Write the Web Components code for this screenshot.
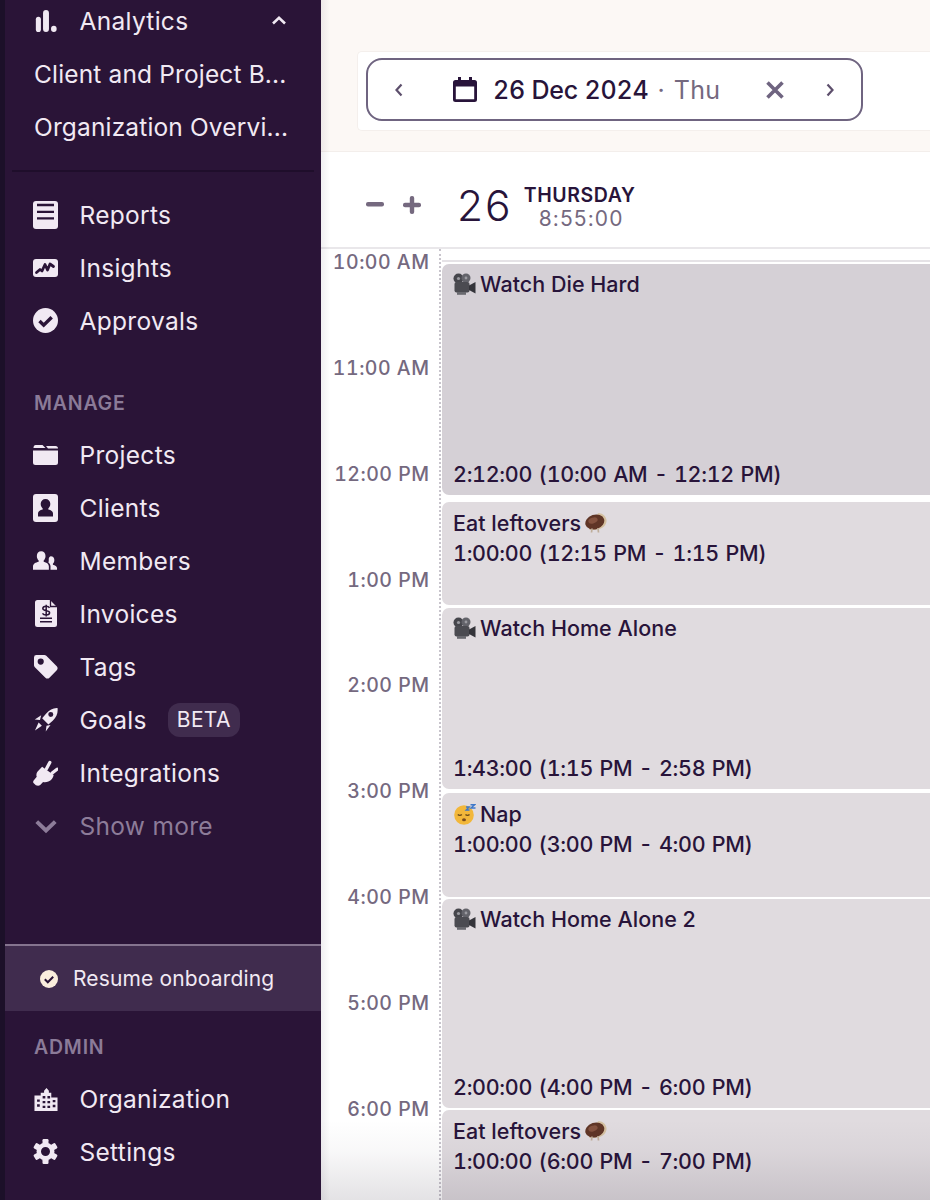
<!DOCTYPE html>
<html>
<head>
<meta charset="utf-8">
<title>Calendar</title>
<style>
  html, body { margin: 0; height: 1200px; overflow: hidden; background: #fff; }
  body { font-family: Inter, "Noto Sans", sans-serif; display: flex; }
</style>
</head>
<body>
<app-shell>
  <side-bar slot="side"></side-bar>
  <day-view slot="main"></day-view>
</app-shell>

<script>
const ICONS = {
  analytics: `<rect x="1" y="8" width="6" height="18" rx="3"/><rect x="9.500" y="0" width="7" height="26" rx="3.500"/><rect x="19" y="18.500" width="6.500" height="7.500" rx="3.200"/>`,
  reports: `<rect width="25" height="28" rx="3"/><path d="M4 4h17M4 10.800h17M4 17.300h17" fill="none" stroke="#2a1437" stroke-width="2.300"/>`,
  insights: `<rect width="25" height="18" rx="3"/><path d="M3.500 13.500l3.500-3 2 1.500 3-6.500 2.500 5.500 2.500-6 3.500 2.500" fill="none" stroke="#2a1437" stroke-width="2.800" stroke-linejoin="round" stroke-linecap="round"/>`,
  check: `<circle cx="12.500" cy="12.500" r="12.500"/><path d="M6.500 13l4.200 4.200 8-8" fill="none" stroke="#2a1437" stroke-width="3.400"/>`,
  projects: `<path d="M2.500 0h7l3 3h-12V2.500A2.500 2.500 0 0 1 2.500 0zM0 5.500h25v12a2.500 2.500 0 0 1-2.500 2.500h-20A2.500 2.500 0 0 1 0 17.500z"/><path d="M13 1h9.500A2.500 2.500 0 0 1 25 3.500H15z"/>`,
  clients: `<rect width="25" height="28" rx="3"/><path fill="#2a1437" d="M12.500 5a4.800 4.800 0 0 1 4.800 5c0 2-.9 3.500-2 4.400v1.200c2.800.6 4.700 1.900 4.700 3.900V22.500H5v-3c0-2 1.900-3.300 4.700-3.900v-1.200c-1.100-.9-2-2.400-2-4.400a4.800 4.800 0 0 1 4.800-5z"/>`,
  members: `<path d="M8.500 0C11.200 0 13 2 13 4.700c0 2-.8 3.700-1.900 4.700v1.400c3 .7 5.400 2.200 5.400 4.700V19H0v-3.500c0-2.500 2.800-4 5.900-4.700V9.400C4.800 8.400 4 6.700 4 4.700 4 2 5.800 0 8.500 0z"/><path d="M18.500 5c2.300 0 3.700 1.700 3.700 4 0 1.700-.6 3-1.500 3.800v1c2.300.5 4.300 1.600 4.300 3.500V19h-6.800v-3.500c0-1.700-.9-3-2.200-4 .3-.8.4-1.600.4-2.500 0-.4 0-.8-.1-1.100C16.700 6 17.500 5 18.500 5z"/>`,
  invoices: `<path fill-rule="evenodd" d="M2.500 0H15l7 7v17.500a2.500 2.500 0 0 1-2.500 2.500h-17A2.500 2.500 0 0 1 0 24.500v-22A2.500 2.500 0 0 1 2.500 0z"/><path d="M5 17.500h12v1.500H5zM5 21h12v1.500H5z" fill="#2a1437"/><path d="M15.500 0v6.500H22" fill="none" stroke="#2a1437" stroke-width="1.300"/><path d="M14.500 7.800c-.6-1-1.700-1.500-3.300-1.500-2 0-3.400.9-3.400 2.300 0 3 6.800 1.500 6.800 4.200 0 1.300-1.400 2.200-3.500 2.200-1.700 0-3-.6-3.600-1.700M11.200 4.800v11.800" fill="none" stroke="#2a1437" stroke-width="1.500"/>`,
  tags: `<path fill-rule="evenodd" d="M2.500 0h8.300c.8 0 1.400.3 2 .8l10.900 11c1.200 1.200 1.200 3 0 4.200l-7.600 7.600c-1.200 1.200-3 1.200-4.200 0L.9 12.800A3 3 0 0 1 0 10.700V2.500A2.500 2.500 0 0 1 2.500 0zM7 3.700a3.200 3.200 0 1 0 0 6.400 3.200 3.200 0 0 0 0-6.400z"/>`,
  goals: `<path fill-rule="evenodd" d="M24.500.5c.7 5-1 9.500-5 13.200l-4.500 4-6.500-6.500 4-4.700C16.200 2.500 20 .2 24.500.5zM17.500 4.800a2.600 2.600 0 1 0 0 5.200 2.600 2.600 0 0 0 0-5.200z"/><path d="M7.500 8L.8 12.500l5.400.6zM13 19l-.8 6 5-6.800zM4.800 15.500l3.400 3.400-7.200 5z"/>`,
  plug: `<path d="M14 8.500l3.500-6.500M20 13l5-4" fill="none" stroke="currentColor" stroke-width="3.400" stroke-linecap="round"/><path d="M9.500 6.500L21.500 15c-.5 3-2.500 5.500-5.500 6.800-2 .9-4 1-5.500.5L7.500 25.500c-1 1-3 1-4.500.3L.5 23.500c-.6-1-.4-2 .4-3l3-3.500c-.8-2-.3-4 .9-5.500z"/>`,
  chevron: `<path d="M2 5l10.500 10L23 5" fill="none" stroke="currentColor" stroke-width="4.500"/>`,
  org: `<path fill-rule="evenodd" d="M7 10V7h3.500V5L13 2l2.500 3v2H18v3h0v2h6.500v14H.5V10zM3.200 14v2.500h2.800V14zM3.200 19v2.500h2.800V19zM9 10.500V13h2.800v-2.500zM14 10.500V13h2.800v-2.500zM9 15.500V18h2.800v-2.500zM14 15.500V18h2.800v-2.500zM9 20.500V23h2.800v-2.500zM14 20.500V23h2.800v-2.500zM19.500 14.500V17h2.800v-2.500zM19.500 19.500V22h2.800v-2.500z"/>`,
  gear: `<path fill-rule="evenodd" d="M12.500 3.500a9 9 0 1 1 0 18 9 9 0 0 1 0-18zM12.500 8a4.500 4.500 0 1 0 0 9 4.500 4.500 0 0 0 0-9z"/><rect x="9.500" y="0" width="6" height="5" rx="1.200"/><rect x="9.500" y="0" width="6" height="5" rx="1.200" transform="rotate(60 12.500 12.500)"/><rect x="9.500" y="0" width="6" height="5" rx="1.200" transform="rotate(120 12.500 12.500)"/><rect x="9.500" y="0" width="6" height="5" rx="1.200" transform="rotate(180 12.500 12.500)"/><rect x="9.500" y="0" width="6" height="5" rx="1.200" transform="rotate(240 12.500 12.500)"/><rect x="9.500" y="0" width="6" height="5" rx="1.200" transform="rotate(300 12.500 12.500)"/>`
};
const ICON_BOX = {
  analytics: [26,26,22,24], reports: [25,28,25,28], insights: [25,18,25,18], check: [25,25,25,25],
  projects: [25,20,25,20], clients: [25,28,25,28], members: [26,19,26,19], invoices: [22,27,22,27],
  tags: [25,25,24,24], goals: [25,25,24,25], plug: [26,26,25,26], chevron: [25,20,22,18],
  org: [25,26,24,25], gear: [25,25,25,25]
};

class NavIcon extends HTMLElement {
  connectedCallback() {
    const name = this.getAttribute('name');
    const [vw, vh, w, h] = ICON_BOX[name];
    this.attachShadow({ mode: 'open' }).innerHTML = `
      <style>
        :host { display: flex; width: 25px; height: 28px; align-items: center; justify-content: center; flex: none; color: inherit; }
        svg { display: block; fill: currentColor; }
      </style>
      <svg width="${w}" height="${h}" viewBox="0 0 ${vw} ${vh}">${ICONS[name]}</svg>`;
  }
}
customElements.define('nav-icon', NavIcon);

class NavItem extends HTMLElement {
  constructor() {
    super();
    this.attachShadow({ mode: 'open' }).innerHTML = `
      <style>
        :host { display: flex; align-items: center; height: 53px; padding-left: 28px; color: #f1e9f3; font-size: 24.500px; letter-spacing: .3px; white-space: nowrap; }
        :host([muted]) { color: #8d7c99; }
        ::slotted(nav-icon) { margin-right: 21.500px; }
      </style>
      <slot name="icon"></slot><slot></slot>`;
  }
}
customElements.define('nav-item', NavItem);

class NavHeading extends HTMLElement {
  constructor() {
    super();
    this.attachShadow({ mode: 'open' }).innerHTML = `
      <style>
        :host { display: block; height: 20px; line-height: 20px; padding-left: 29px; font-size: 19.500px; font-weight: 600; letter-spacing: .8px; color: #8b7b98; }
      </style>
      <slot></slot>`;
  }
}
customElements.define('nav-heading', NavHeading);

class SideBar extends HTMLElement {
  constructor() {
    super();
    const item = (icon, label) => `<nav-item><nav-icon slot="icon" name="${icon}"></nav-icon>${label}</nav-item>`;
    this.attachShadow({ mode: 'open' }).innerHTML = `
      <style>
        :host { display: flex; flex-direction: column; width: 316px; height: 1206px; margin-top: -6px; background: #2a1437; border-left: 5px solid #1c1029; font-family: Inter, "Noto Sans", sans-serif; }
        .caret { margin-left: auto; margin-right: 35px; }
        .sub { padding-left: 29px; letter-spacing: .15px; }
        hr { border: 0; height: 2px; background: #1f0e2b; margin: 17px 7px 16px 7px; width: 302px; }
        .head-manage { margin: 46px 0 15px; }
        .beta { margin-left: 21px; padding: 0 9px; height: 34px; line-height: 34px; border-radius: 12px; background: #402c4e; font-size: 21px; letter-spacing: .3px; }
        .resume { margin-top: auto; display: flex; align-items: center; height: 65px; border-top: 2px solid #85748f; background: #402c4e; padding-left: 35px; color: #f1e9f3; font-size: 21px; letter-spacing: .15px; }
        .resume svg { width: 18px; height: 18px; margin-right: 15px; flex: none; }
        .head-admin { margin: 26px 0 15px; }
        .foot { padding-bottom: 22px; }
      </style>
      <nav-item><nav-icon slot="icon" name="analytics"></nav-icon>Analytics
        <svg class="caret" width="14" height="9" viewBox="0 0 14 9"><path d="M1 7.500L7 1.800l6 5.700" fill="none" stroke="#f1e9f3" stroke-width="2.600"/></svg>
      </nav-item>
      <nav-item class="sub">Client and Project B...</nav-item>
      <nav-item class="sub">Organization Overvi...</nav-item>
      <hr>
      ${item('reports', 'Reports')}
      ${item('insights', 'Insights')}
      ${item('check', 'Approvals')}
      <nav-heading class="head-manage">MANAGE</nav-heading>
      ${item('projects', 'Projects')}
      ${item('clients', 'Clients')}
      ${item('members', 'Members')}
      ${item('invoices', 'Invoices')}
      ${item('tags', 'Tags')}
      <nav-item><nav-icon slot="icon" name="goals"></nav-icon>Goals<span class="beta">BETA</span></nav-item>
      ${item('plug', 'Integrations')}
      <nav-item muted><nav-icon slot="icon" name="chevron"></nav-icon>Show more</nav-item>
      <div class="resume">
        <svg viewBox="0 0 18 18"><circle cx="9" cy="9" r="9" fill="#fbeedd"/><path d="M4.800 9.300l3 3 5.400-5.600" fill="none" stroke="#2a1437" stroke-width="2"/></svg>
        Resume onboarding
      </div>
      <nav-heading class="head-admin">ADMIN</nav-heading>
      ${item('org', 'Organization')}
      <div class="foot">${item('gear', 'Settings')}</div>`;
  }
}
customElements.define('side-bar', SideBar);

class DatePicker extends HTMLElement {
  constructor() {
    super();
    this.attachShadow({ mode: 'open' }).innerHTML = `
      <style>
        :host { display: block; margin-left: 36px; padding: 6px 8px 8px; height: 64px; background: #fff; border: 1px solid #f4efec; border-right: 0; border-radius: 5px 0 0 5px; }
        .box { display: flex; align-items: center; box-sizing: border-box; width: 497px; height: 63px; border: 2px solid #6f6480; border-radius: 16px; color: #28143a; }
        .prev { margin-left: 26px; }
        .cal { margin-left: 49px; margin-right: 16px; }
        .date { font-size: 25px; font-weight: 500; letter-spacing: -.2px; white-space: nowrap; font-variant-numeric: tabular-nums; }
        .dot { color: #75697f; margin: 0 9px 0 9px; font-size: 25px; }
        .day { color: #75697f; font-size: 25px; letter-spacing: .3px; }
        .x { margin-left: 45px; }
        .next { margin-left: 40px; }
      </style>
      <div class="box">
        <svg class="prev" width="10" height="16" viewBox="0 0 10 16"><path d="M7.500 2.500L2.500 8l5 5.500" fill="none" stroke="#5d4f6c" stroke-width="2.200"/></svg>
        <svg class="cal" width="24" height="25" viewBox="0 0 24 25"><path d="M5 0h3v3h8V0h3v3h2.500A2.500 2.500 0 0 1 24 5.500v17a2.500 2.500 0 0 1-2.500 2.500h-19A2.500 2.500 0 0 1 0 22.500v-17A2.500 2.500 0 0 1 2.500 3H5zM2.800 9.500v12.700h18.400V9.500z" fill="#28143a"/></svg>
        <span class="date">26 Dec 2024</span><span class="dot">·</span><span class="day">Thu</span>
        <svg class="x" width="20" height="20" viewBox="0 0 20 20"><path d="M2.500 2.500l15 15M17.500 2.500l-15 15" fill="none" stroke="#6f6480" stroke-width="3.600"/></svg>
        <svg class="next" width="10" height="16" viewBox="0 0 10 16"><path d="M2.500 2.500L7.500 8l-5 5.500" fill="none" stroke="#5d4f6c" stroke-width="2.200"/></svg>
      </div>`;
  }
}
customElements.define('date-picker', DatePicker);

class DayHeader extends HTMLElement {
  constructor() {
    super();
    this.attachShadow({ mode: 'open' }).innerHTML = `
      <style>
        :host { display: flex; align-items: center; box-sizing: border-box; height: 97px; padding-left: 45px; border-bottom: 2px solid #e9e7ea; color: #28143a; }
        .zoom { display: flex; align-items: center; gap: 19px; margin-right: 36px; padding-top: 10px; }
        .num { font-size: 42.500px; font-weight: 300; letter-spacing: 2px; margin-right: 11px; padding-top: 12px; }
        .meta { display: flex; flex-direction: column; align-items: center; padding-top: 15px; }
        .dow { font-size: 19.500px; font-weight: 600; letter-spacing: .6px; line-height: 24px; }
        .time { font-size: 21px; color: #75697f; letter-spacing: 1.100px; line-height: 24px; padding-left: 3px; }
      </style>
      <div class="zoom">
        <svg width="18" height="5" viewBox="0 0 18 5"><rect width="18" height="4.500" rx="2" fill="#75697f"/></svg>
        <svg width="18" height="18" viewBox="0 0 18 18"><rect y="6.800" width="18" height="4.400" rx="2" fill="#75697f"/><rect x="6.800" width="4.400" height="18" rx="2" fill="#75697f"/></svg>
      </div>
      <span class="num">26</span>
      <div class="meta"><span class="dow">THURSDAY</span><span class="time">8:55:00</span></div>`;
  }
}
customElements.define('day-header', DayHeader);

const EMOJI = {
  camera: `<svg width="23" height="22" viewBox="0 0 23 22"><circle cx="5.500" cy="5.500" r="5" fill="#46464c"/><circle cx="13" cy="5" r="4.500" fill="#63636a"/><circle cx="5.500" cy="5.500" r="1.600" fill="#9a9aa0"/><circle cx="13" cy="5" r="1.400" fill="#9a9aa0"/><rect x="1.500" y="9" width="15" height="10.500" rx="2" fill="#4b4b51"/><path d="M16 12.500l6.500-3.500v11.500L16 17z" fill="#34343a"/><rect x="4" y="19" width="9" height="2.800" fill="#6a6a70"/></svg>`,
  turkey: `<svg width="22" height="20" viewBox="0 0 22 20"><path d="M13 .3c4-.8 8 2.500 8.500 6.700.3 2.500-.8 4.800-2.500 6.500-2 2-5 3.200-8.500 3.200H4z" fill="#d4c0a0"/><ellipse cx="9.800" cy="9" rx="9.700" ry="7.300" fill="#5f3526" transform="rotate(-18 9.800 9)"/><ellipse cx="8" cy="7.500" rx="4.800" ry="2.800" fill="#84523f" transform="rotate(-18 8 7.500)"/><path d="M7 15.500l-.5 4M13 15l.5 4.500" stroke="#bfae9a" stroke-width="1.700"/></svg>`,
  sleep: `<svg width="23" height="21" viewBox="0 0 23 21"><circle cx="11" cy="11" r="9.800" fill="#f2b73a"/><path d="M4.800 10.500c1 1 3 1 4 0M12.500 10.500c1 1 3 1 4 0" fill="none" stroke="#6b4a16" stroke-width="1.400"/><ellipse cx="11" cy="15.800" rx="2" ry="1.500" fill="#7a4c1d"/><path d="M13 3h3.200l-3 3h3.300M17.500.8h4L18 4h4.500" fill="none" stroke="#3f78c9" stroke-width="1.400"/></svg>`
};

class CalEvent extends HTMLElement {
  constructor() {
    super();
    this.attachShadow({ mode: 'open' }).innerHTML = `
      <style>
        :host { display: flex; flex-direction: column; justify-content: space-between; box-sizing: border-box; flex: none; padding: 7px 0 8px 11px; border-radius: 7px 0 0 7px; background: #e0dbdf; color: #28143a; font-size: 21.500px; font-weight: 500; line-height: 26px; white-space: nowrap; }
        :host([dark]) { background: #d5d0d6; }
        :host([compact]) { justify-content: flex-start; gap: 4px; padding-top: 8px; }
        ::slotted([slot="title"]) { display: flex; align-items: center; gap: 4px; letter-spacing: .02px; }
        ::slotted([slot="time"]) { font-variant-numeric: tabular-nums; letter-spacing: -.3px; word-spacing: 1px; }
      </style>
      <slot name="title"></slot><slot name="time"></slot>`;
  }
  connectedCallback() {
    this.style.height = this.getAttribute('h') + 'px';
    this.style.marginTop = (this.getAttribute('gap') || 0) + 'px';
  }
}
customElements.define('cal-event', CalEvent);

class DayView extends HTMLElement {
  constructor() {
    super();
    const hours = ['10:00 AM','11:00 AM','12:00 PM','1:00 PM','2:00 PM','3:00 PM','4:00 PM','5:00 PM','6:00 PM'];
    const ev = (h, gap, title, time, attrs = '') => `<cal-event h="${h}" gap="${gap}" ${attrs}><div slot="title">${title}</div><div slot="time">${time}</div></cal-event>`;
    this.attachShadow({ mode: 'open' }).innerHTML = `
      <style>
        :host { display: flex; flex-direction: column; flex: 1; height: 1200px; min-width: 0; position: relative; overflow: hidden; background: #fff; font-family: Inter, "Noto Sans", sans-serif; }
        .top { height: 152px; box-sizing: border-box; padding-top: 51px; background: #fcf8f5; border-bottom: 1px solid #f3eeeb; }
        .grid { display: flex; flex: 1; min-height: 0; }
        .hours { width: 118px; flex: none; display: flex; flex-direction: column; gap: 81.850px; align-items: flex-end; box-sizing: border-box; padding: 1px 9.500px 0 0; }
        .hours span { height: 24px; line-height: 24px; color: #75697f; font-size: 19.500px; font-weight: 500; letter-spacing: .5px; white-space: nowrap; font-variant-numeric: tabular-nums; }
        .events { flex: 1; display: flex; flex-direction: column; border-left: 2px dotted #c8c4cc; padding: 12px 0 0 1px; position: relative; }
        .events::before { content: ""; position: absolute; left: 1px; right: 0; top: 11px; height: 2px; background: #e5e2e6; }
        .fade-left { position: absolute; left: 0; top: 0; bottom: 0; width: 9px; background: linear-gradient(to right, rgba(40,20,55,.07), rgba(40,20,55,0)); pointer-events: none; }
        .fade-bottom { position: absolute; left: 0; right: 0; bottom: 0; height: 80px; background: linear-gradient(to bottom, rgba(30,20,40,0), rgba(30,20,40,.03) 40%, rgba(30,20,40,.12)); pointer-events: none; }
      </style>
      <div class="top"><date-picker></date-picker></div>
      <day-header></day-header>
      <div class="grid">
        <div class="hours">${hours.map(h => `<span>${h}</span>`).join('')}</div>
        <div class="events">
          ${ev(231, 3, `${EMOJI.camera}Watch Die Hard`, '2:12:00 (10:00 AM - 12:12 PM)', 'dark')}
          ${ev(103, 7, `Eat leftovers ${EMOJI.turkey}`, '1:00:00 (12:15 PM - 1:15 PM)', 'compact')}
          ${ev(181, 3, `${EMOJI.camera}Watch Home Alone`, '1:43:00 (1:15 PM - 2:58 PM)')}
          ${ev(104, 4, `${EMOJI.sleep}Nap`, '1:00:00 (3:00 PM - 4:00 PM)', 'compact')}
          ${ev(209, 2, `${EMOJI.camera}Watch Home Alone 2`, '2:00:00 (4:00 PM - 6:00 PM)')}
          ${ev(110, 2, `Eat leftovers ${EMOJI.turkey}`, '1:00:00 (6:00 PM - 7:00 PM)', 'compact')}
        </div>
      </div>
      <div class="fade-left"></div>
      <div class="fade-bottom"></div>`;
  }
}
customElements.define('day-view', DayView);

class AppShell extends HTMLElement {
  constructor() {
    super();
    this.attachShadow({ mode: 'open' }).innerHTML = `
      <style>
        :host { display: flex; width: 930px; height: 1200px; overflow: hidden; }
        ::slotted([slot="side"]) { flex: none; }
      </style>
      <slot name="side"></slot><slot name="main"></slot>`;
  }
}
customElements.define('app-shell', AppShell);
</script>
</body>
</html>
